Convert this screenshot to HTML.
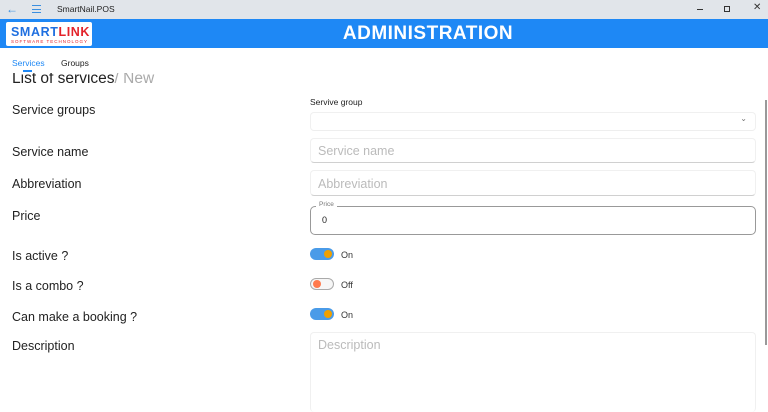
<!DOCTYPE html><html><head><style>
*{margin:0;padding:0;box-sizing:border-box}
body{width:768px;height:403px;overflow:hidden;background:#fff;font-family:"Liberation Sans",sans-serif;position:relative;color:#222}
.a{position:absolute}
.lbl{position:absolute;left:12px;font-size:12.5px;color:#222}
.in{position:absolute;left:310px;width:446px;border:1px solid #f0f0f0;border-bottom:1px solid #d0d0d0;border-radius:4px;background:#fff;font-size:12.5px;color:#bbb;padding-left:7px}
.tg{position:absolute;left:310px;width:24px;height:12px;border-radius:6px}
.tg i{position:absolute;top:2px;width:8px;height:8px;border-radius:50%}
.tt{position:absolute;left:341px;font-size:9px;color:#333}
</style></head><body>
<div class="a" style="left:0;top:0;width:768px;height:19px;background:#e1e5ea"></div>
<div class="a" style="left:6px;top:2px;font-size:12px;color:#3b8fe0">&#8592;</div>
<div class="a" style="left:32px;top:5px;width:9px;height:8px;border-top:1px solid #3b8fe0;border-bottom:1px solid #3b8fe0"><div style="margin-top:2.5px;height:1px;background:#3b8fe0"></div></div>
<div class="a" style="left:57px;top:4px;font-size:8.5px;color:#222">SmartNail.POS</div>
<div class="a" style="left:697px;top:9px;width:6px;height:1px;background:#333"></div>
<div class="a" style="left:724px;top:6px;width:6px;height:6px;border:1.3px solid #333"></div>
<div class="a" style="left:753px;top:2px;font-size:10px;color:#333">&#10005;</div>
<div class="a" style="left:0;top:19px;width:768px;height:29px;background:#1e88f5"></div>
<div class="a" style="left:6px;top:22px;width:86px;height:24px;background:#fff;border-radius:2px"></div>
<div class="a" style="left:11px;top:25px;font-size:12.5px;font-weight:bold;letter-spacing:0.6px;color:#1e6fe0;white-space:nowrap">SMART<span style="color:#e3222a">LINK</span></div>
<div class="a" style="left:11px;top:39px;font-size:4.5px;letter-spacing:1px;color:#e3222a;white-space:nowrap">SOFTWARE TECHNOLOGY</div>
<div class="a" style="left:0;top:23px;width:856px;text-align:center;font-size:19px;font-weight:bold;color:#fff;letter-spacing:0.5px">ADMINISTRATION</div>
<div class="a" style="left:12px;top:58px;font-size:8.5px;color:#1e88f5">Services</div>
<div class="a" style="left:61px;top:58px;font-size:8.5px;color:#222">Groups</div>
<div class="a" style="left:23px;top:70px;width:9px;height:2px;background:#1e88f5"></div>
<div class="a" style="left:12px;top:73px;height:15px;overflow:hidden;width:200px"><div style="margin-top:-4px;font-size:15.5px;line-height:20px;color:#222">List of services<span style="color:#aaa">/ New</span></div></div>
<div class="lbl" style="top:103px">Service groups</div>
<div class="lbl" style="top:145px">Service name</div>
<div class="lbl" style="top:177px">Abbreviation</div>
<div class="lbl" style="top:209px">Price</div>
<div class="lbl" style="top:249px">Is active ?</div>
<div class="lbl" style="top:279px">Is a combo ?</div>
<div class="lbl" style="top:310px">Can make a booking ?</div>
<div class="lbl" style="top:339px">Description</div>
<div class="a" style="left:310px;top:97px;font-size:8.5px;color:#222">Servive group</div>
<div class="in" style="top:112px;height:19px;border-bottom-color:#eee"><span class="a" style="right:8px;top:1px;font-size:8px;color:#777">&#8964;</span></div>
<div class="in" style="top:138px;height:25px;line-height:24px">Service name</div>
<div class="in" style="top:170px;height:26px;line-height:26px">Abbreviation</div>
<div class="a" style="left:310px;top:206px;width:446px;height:29px;border:1px solid #999;border-radius:5px"></div>
<div class="a" style="left:316px;top:201px;background:#fff;padding:0 3px;font-size:6.5px;color:#777">Price</div>
<div class="a" style="left:322px;top:215px;font-size:9px;color:#222">0</div>
<div class="tg" style="top:248px;background:#4a9be8"><i style="right:2px;background:#f0a000"></i></div><div class="tt" style="top:250px">On</div>
<div class="tg" style="top:278px;background:#f6f6f6;border:1px solid #aaa"><i style="left:2px;top:1px;background:#ff7a4d"></i></div><div class="tt" style="top:280px">Off</div>
<div class="tg" style="top:308px;background:#4a9be8"><i style="right:2px;background:#f0a000"></i></div><div class="tt" style="top:310px">On</div>
<div class="in" style="top:332px;height:80px;border-bottom:none;padding-top:5px;font-size:12.5px">Description</div>
<div class="a" style="left:765px;top:100px;width:1.5px;height:245px;background:#999"></div>
</body></html>
